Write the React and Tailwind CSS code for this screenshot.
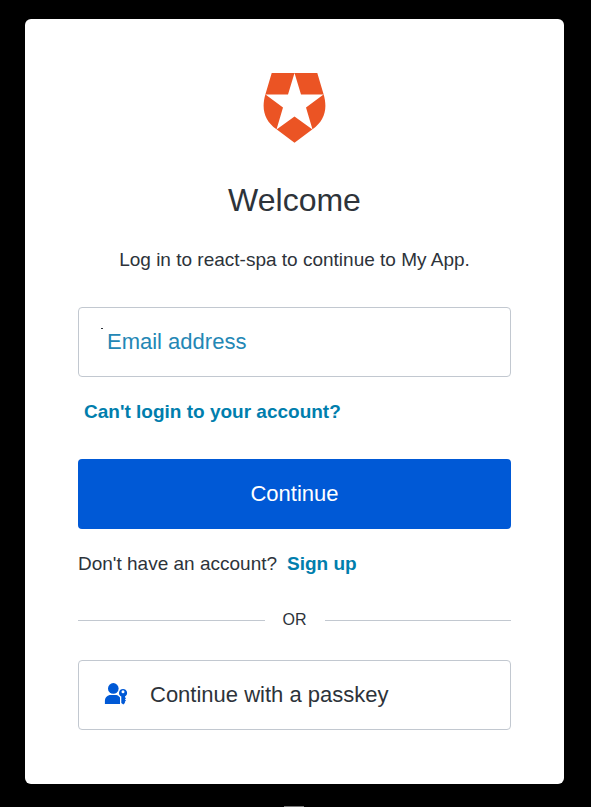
function ShieldLogo() {
  return (
    <svg className="mx-auto block h-[70px] w-[64px]" viewBox="0 0 64 70" role="img" aria-label="Auth0">
      <path
        fill="#eb5424"
        fillRule="evenodd"
        d="M8.700 0H54.300L60.500 21C65 36 61.500 48 49.500 56.300L31.500 69.700L13.500 56.300C1.500 48 -2 36 2.500 21ZM31.500 0L25 21.500H2.500L20 34.500L13.500 56.500L31.500 43.500L49.500 56.500L43 34.500L60.500 21.500H38Z"
      />
    </svg>
  );
}

function PasskeyIcon() {
  return (
    <svg className="h-[24px] w-[24px] shrink-0" viewBox="0 -1 24 24" fill="#0059d6" aria-hidden="true">
      <circle cx="9.300" cy="5.400" r="5.300" />
      <path d="M0.900 21V18C0.900 14.500 3.400 12.100 6.800 12.100H11.200C12.700 12.100 14 12.600 15 13.400L16 14.500V21Z" />
      <path
        fillRule="evenodd"
        d="M19 5.900A4 4 0 0 1 21 13.400V14.200L22 15.200L20.900 16.400L22 17.600L20.900 18.800V20L19.300 21.600L17.300 20V13.500A4 4 0 0 1 19 5.900ZM19 7.200A1.500 1.500 0 1 0 19 10.200A1.500 1.500 0 1 0 19 7.200Z"
      />
    </svg>
  );
}

export default function App() {
  return (
    <div className="relative min-h-screen bg-black px-[25px] pt-[19px] pb-[23px] font-['Liberation_Sans',Arial,sans-serif] text-[#2d333a]">
      <main className="mr-[2px] rounded-md bg-white px-[53px] pt-[54px] pb-[54px]">
        <ShieldLogo />
        <h1 className="mt-[37px] text-center text-[32px] leading-[40px]">Welcome</h1>
        <p className="mt-[26px] text-center text-[19px] leading-[28px]">
          Log in to react-spa to continue to My App.
        </p>
        <form className="mt-[33px]" onSubmit={(e) => e.preventDefault()}>
          <div className="relative">
            <input
              id="email"
              type="email"
              placeholder=" "
              className="peer block h-[70px] w-full rounded border border-[#c2c8d0] bg-white px-[28px] text-[22px]"
            />
            <label
              htmlFor="email"
              className="invisible absolute inset-y-0 left-[29px] flex cursor-text items-center text-[22px] leading-[28px] text-[#2387b5] peer-placeholder-shown:visible"
            >
              Email address
            </label>
            <span className="absolute top-[21px] left-[23px] h-px w-[2px] bg-[#2d333a]" />
          </div>
          <a href="#reset" className="mt-[21px] ml-[6px] block text-[19px] leading-[28px] font-bold text-[#007ead]">
            Can't login to your account?
          </a>
          <button type="submit" className="mt-[33px] block h-[70px] w-full rounded bg-[#0059d6] pb-[2px] text-[22px] text-white">
            Continue
          </button>
        </form>
        <p className="mt-[21px] flex gap-[10px] text-[19px] leading-[28px]">
          Don't have an account?
          <a href="#signup" className="font-bold text-[#007ead]">Sign up</a>
        </p>
        <div className="mt-[28px] flex items-center gap-[18px] text-[16px] leading-[28px]">
          <span className="h-px flex-1 bg-[#c2c8d0]" />
          OR
          <span className="h-px flex-1 bg-[#c2c8d0]" />
        </div>
        <button type="button" className="mt-[26px] flex h-[70px] w-full items-center gap-[22px] rounded border border-[#c2c8d0] px-[25px] pb-[2px] text-[22px]">
          <PasskeyIcon />
          Continue with a passkey
        </button>
      </main>
      <span className="absolute bottom-0 left-[284px] h-px w-[20px] bg-[#777777]" />
    </div>
  );
}
